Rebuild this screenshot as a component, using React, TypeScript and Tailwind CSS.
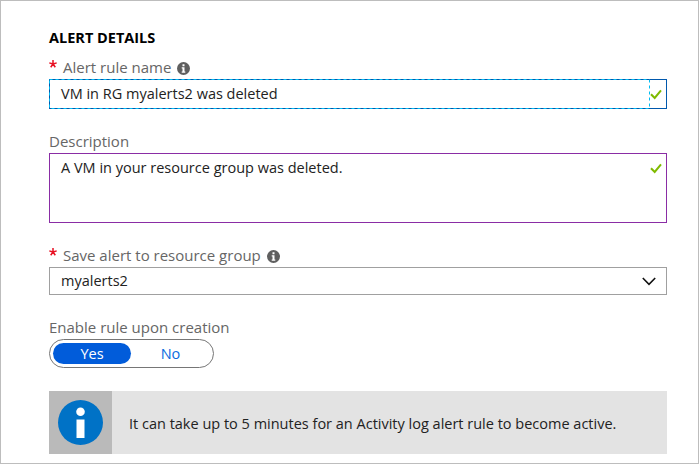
import React from "react";

const dash = "repeating-linear-gradient";

function InfoDot() {
  return (
    <svg width="13" height="13" viewBox="0 0 13 13" className="block shrink-0">
      <circle cx="6.5" cy="6.5" r="6.5" fill="#5f5f5f" />
      <path d="M5.5 2.2h2v2h-2zM4.7 5.2h2.8v4.3h.8v1.2H4.7V9.500h.8V6.400h-.8z" fill="#fff" />
    </svg>
  );
}

function Check() {
  return (
    <svg width="12" height="11" viewBox="0 0 12 11" className="block shrink-0">
      <path d="M1 5.200L4.700 9L11 1.300" fill="none" stroke="#7fba00" strokeWidth="2" />
    </svg>
  );
}

function Required() {
  return (
    <svg width="8" height="8" viewBox="0 0 8 8" className="block shrink-0">
      <path d="M4 4V0M4 4L.3 2.900M4 4L7.700 2.900M4 4L1.700 7.300M4 4L6.300 7.300" stroke="#e81123" strokeWidth="1.500" fill="none" />
    </svg>
  );
}

export default function App() {
  return (
    <div className="h-[464px] w-[699px] overflow-hidden border border-[#bdbdbd] bg-white pl-12 pr-[31px] pt-[27px] font-['Open_Sans','Noto_Sans',sans-serif] whitespace-nowrap">
      <h1 className="h-5 text-[14.5px] leading-5 font-bold text-black"><span>ALERT DETAILS</span></h1>
      <div className="mt-2 flex h-[22px] text-[15px] leading-[22px] text-[#666]">
        <div className="w-[14px] pt-1"><Required /></div>
        <span>Alert rule name</span>
        <div className="pt-[6px] pl-[6px]"><InfoDot /></div>
      </div>
      <div className="relative mt-px flex h-[30px] border border-[#0058ad] pl-[11px] text-[14.5px] leading-7 text-[#222]">
        <span className="grow">VM in RG myalerts2 was deleted</span>
        <div className="mr-1 pt-[9px]"><Check /></div>
        <svg className="absolute -top-px -left-px" width="601" height="30" viewBox="0 0 601 30">
          <rect x=".5" y=".5" width="600" height="29" fill="none" stroke="#00bcf2" strokeDasharray="3 3" />
        </svg>
      </div>
      <div className="mt-[21px] h-[22px] text-[15px] leading-[22px] text-[#666]"><span>Description</span></div>
      <div className="mt-px flex h-[70px] border border-[#8a2da5] pl-[11px] text-[14.5px] leading-7 text-[#222]">
        <span className="grow">A VM in your resource group was deleted.</span>
        <div className="mr-1 pt-[9px]"><Check /></div>
      </div>
      <div className="mt-[21px] flex h-[22px] text-[15px] leading-[22px] text-[#666]">
        <div className="w-[14px] pt-1"><Required /></div>
        <span>Save alert to resource group</span>
        <div className="pt-[6px] pl-[6px]"><InfoDot /></div>
      </div>
      <div className="mt-px flex h-7 items-center border border-[#a0a0a0] pl-[11px] text-[14.5px] leading-6 text-[#222]">
        <span className="grow">myalerts2</span>
        <svg width="14" height="9" viewBox="0 0 14 9" className="mr-[10px] block"><path d="M.8 1L7 7.300L13.200 1" fill="none" stroke="#111" strokeWidth="1.600" /></svg>
      </div>
      <div className="mt-[21px] h-[22px] text-[15px] leading-[22px] text-[#666]"><span>Enable rule upon creation</span></div>
      <div className="mt-px flex h-[29px] w-[165px] items-center rounded-full border border-[#767676] p-[3px] text-[14.5px] leading-[21px]">
        <div className="h-[21px] w-[78px] rounded-full bg-[#015cda] text-center text-white">Yes</div>
        <div className="grow text-center text-[#0a6be0]">No</div>
      </div>
      <div className="mt-[23px] flex h-[63px] bg-[#e3e3e3]">
        <div className="flex w-[63px] items-center justify-center bg-[#bababa]">
          <svg width="45" height="45" viewBox="0 0 45 45"><circle cx="22.500" cy="22.500" r="22.500" fill="#0072c6" /><circle cx="22.500" cy="11.800" r="4.300" fill="#fff" /><path d="M18.500 19.500h8v18.500h-8z" fill="#fff" /></svg>
        </div>
        <p className="pl-[17px] text-[14.5px] leading-[65px] text-[#222]">It can take up to 5 minutes for an Activity log alert rule to become active.</p>
      </div>
    </div>
  );
}
